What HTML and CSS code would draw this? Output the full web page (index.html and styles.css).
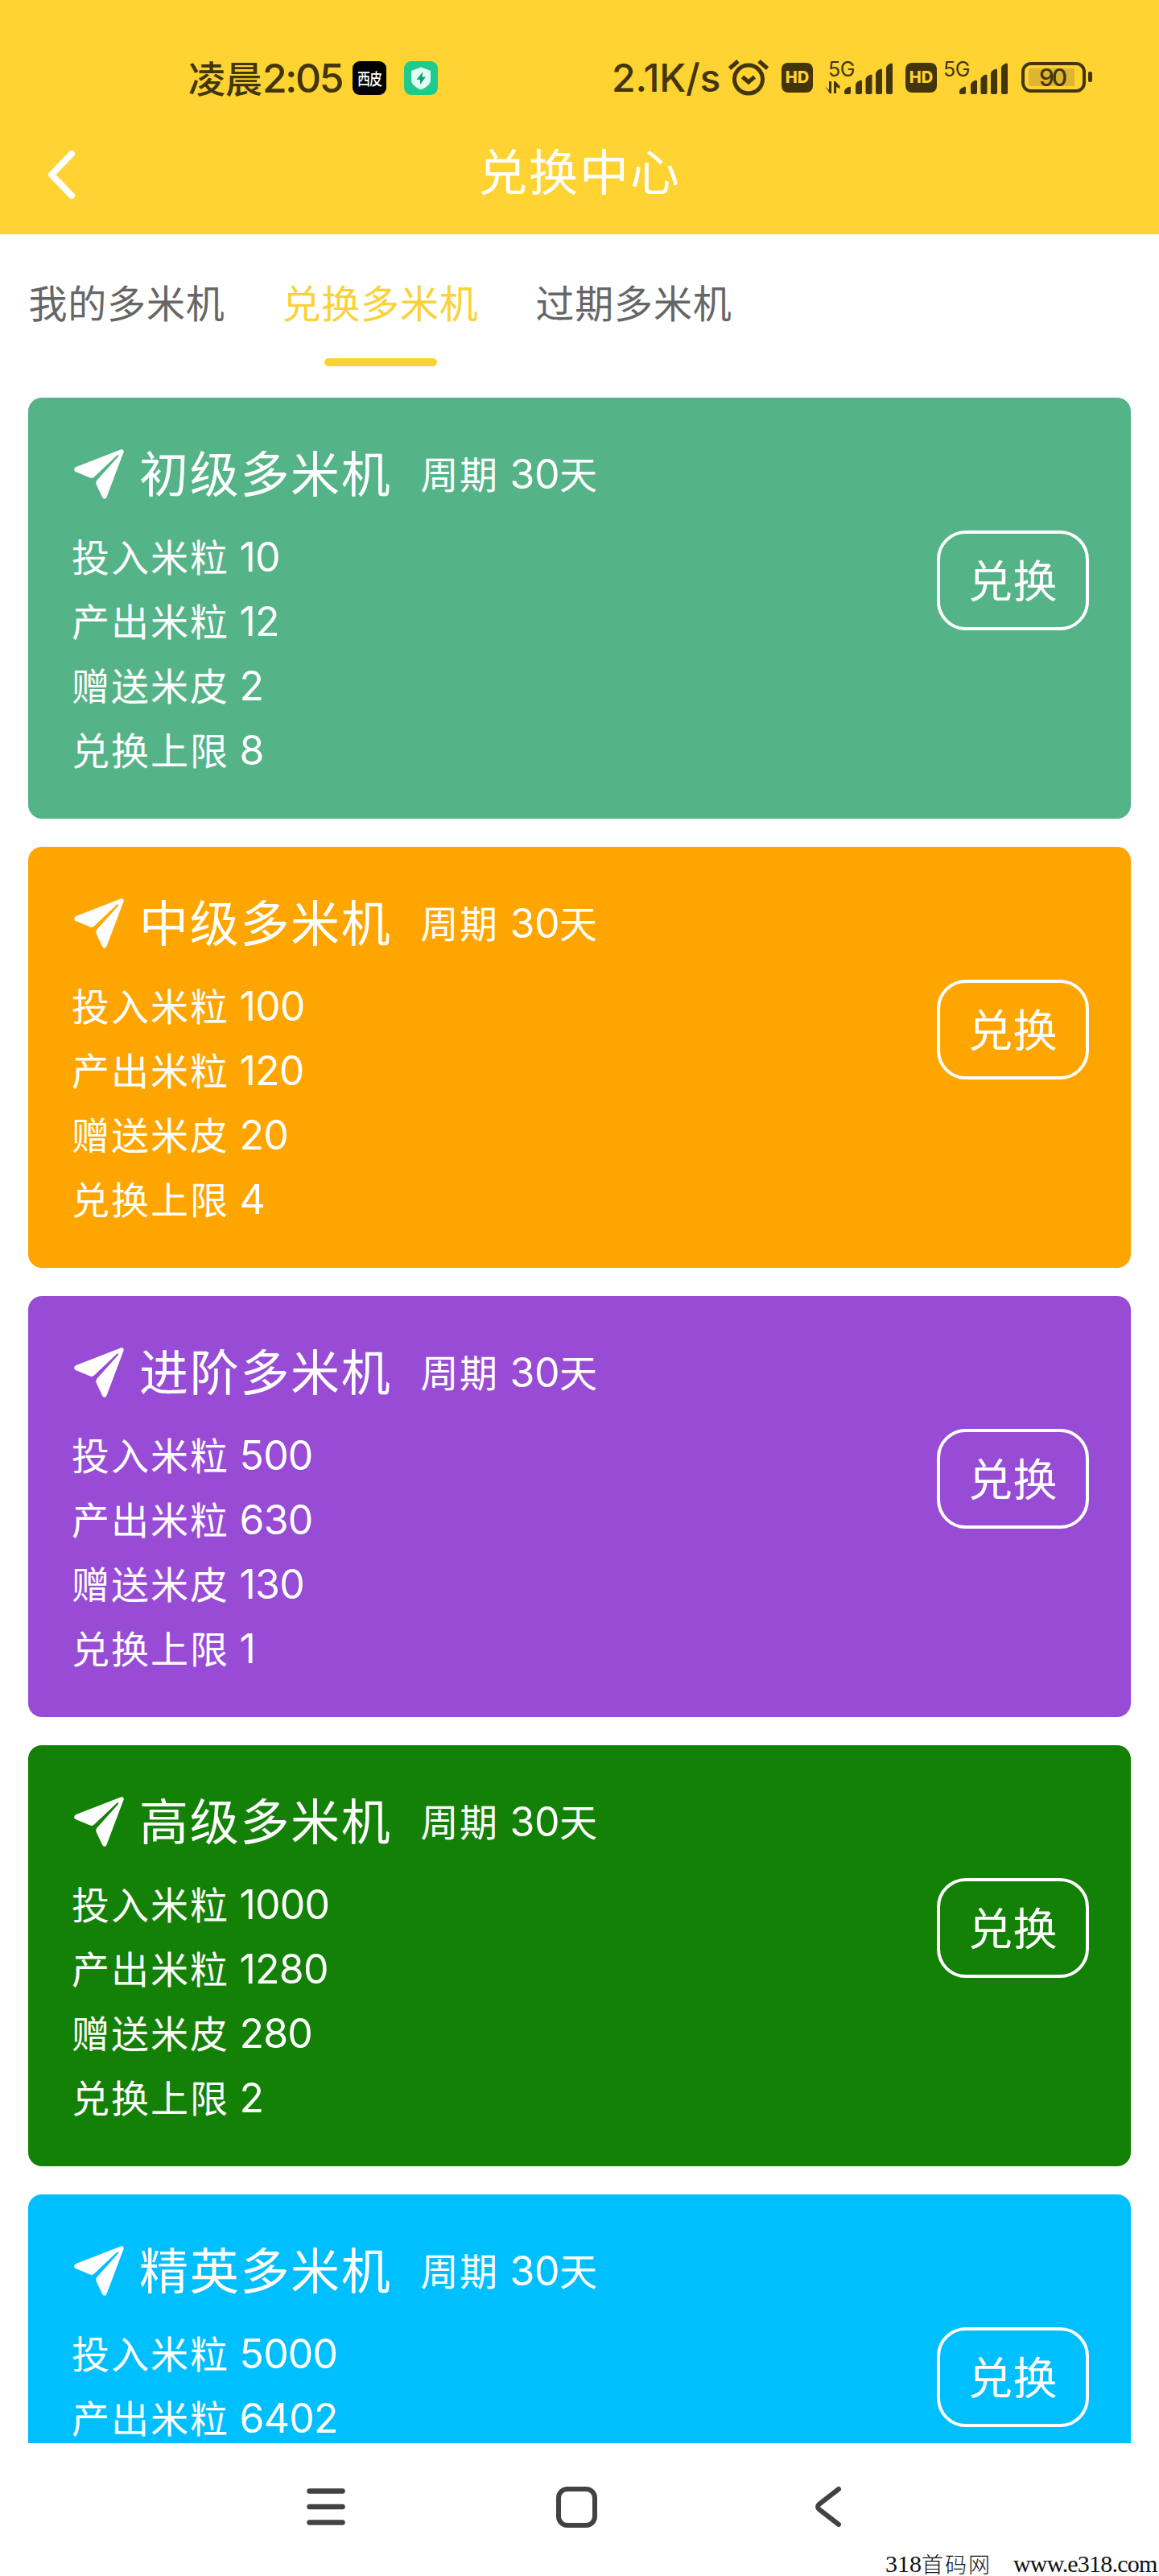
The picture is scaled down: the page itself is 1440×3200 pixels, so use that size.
FILE: index.html
```html
<!DOCTYPE html>
<html lang="zh-CN">
<head>
    <meta charset="UTF-8">
    <meta name="viewport" content="width=device-width, initial-scale=1.0">
    <title>兑换中心</title>
    <link rel="stylesheet" href="styles.css">
</head>
<body>
    <!-- Shared icons -->
    <svg class="defs" width="0" height="0">
        <symbol id="plane" viewBox="0 0 62 62">
            <path d="M58 .5 2.500 22C-.5 23.500-.5 26.500 2 28L20 35.500C22 36.300 23.500 36 25 34.500L53 8Q56 6 55 9L29 38C27.500 40 27 41.500 27.500 43.500L35 59.500C36.500 62.500 39.500 62.500 40.500 59.500L61.500 4C62.500 1.500 60.500-.5 58 .5Z" fill="#fff"/>
        </symbol>
        <symbol id="bars" viewBox="0 0 60 39">
            <path d="M1.500 39Q0 39 0 37V35Q1 31 7 29.500 8 29.500 8 31V37Q8 39 6 39ZM14 37V27Q15 23 20.500 21.500 22 21.500 22 23V37Q22 39 20 39H16Q14 39 14 37ZM26.500 37V20Q27.500 16 33 14.500 34.500 14.500 34.500 16V37Q34.500 39 32.500 39H28.500Q26.500 39 26.500 37ZM39 37V13Q40 9 45.500 7.500 47 7.500 47 9V37Q47 39 45 39H41Q39 39 39 37ZM52 37V6Q53 2 58.500.5 60 .5 60 2V37Q60 39 58 39H54Q52 39 52 37Z" fill="#42350c"/>
        </symbol>
    </svg>

    <!-- Header -->
    <header class="header">
        <div class="status-bar">
            <span class="clock">凌晨<b>2:05</b></span>
            <span class="app-icon"><i>西皮</i></span>
            <svg class="shield" width="42" height="42" viewBox="0 0 42 42">
                <rect width="42" height="42" rx="9" fill="#1ecb8b"/>
                <path d="M21 7.500 33 12V23C33 29 27 33 21 35.500 15 33 9 29 9 23V12Z" fill="#e2fff5"/>
                <path d="M23.500 13 15.500 23H20V29L27 19.500H22.500Z" fill="#12a373"/>
            </svg>
            <span class="speed">2.1K/s</span>
            <svg class="alarm" width="52" height="46" viewBox="0 0 52 46" fill="none" stroke="#42350c" stroke-width="5">
                <circle cx="26" cy="25.500" r="17.500"/>
                <path d="M2.500 12 13 3M39 3 49.500 12M18.500 22.500 26 29 33.500 22.500"/>
            </svg>
            <span class="hd">HD</span>
            <div class="signal">
                <span class="net">5G</span>
                <svg width="86" height="44" viewBox="0 0 86 44">
                    <path d="M0 33 5 38V27H8V42H6ZM11 42V27H13L18.500 33V36L14 34V42Z" fill="#42350c"/>
                    <use href="#bars" x="24" y="4" width="60" height="39"/>
                </svg>
            </div>
            <span class="hd hd-2">HD</span>
            <div class="signal signal-2">
                <span class="net">5G</span>
                <svg width="86" height="44" viewBox="0 0 86 44">
                    <use href="#bars" x="24" y="4" width="60" height="39"/>
                </svg>
            </div>
            <svg class="battery" width="88" height="38" viewBox="0 0 88 38">
                <rect x="2" y="2" width="76" height="34" rx="10" fill="none" stroke="#42350c" stroke-width="4"/>
                <rect x="9" y="8" width="57" height="22" fill="#dfb52f"/>
                <rect x="83" y="12" width="5" height="13" rx="2" fill="#42350c"/>
                <text x="22" y="30" textLength="35" class="charge">90</text>
            </svg>
        </div>
        <div class="title-bar">
            <svg class="back" width="34" height="60" viewBox="0 0 34 60" fill="none" stroke="#fff" stroke-width="8" stroke-linecap="round" stroke-linejoin="round">
                <path d="M30 4 5 30 30 56"/>
            </svg>
            <h1>兑换中心</h1>
        </div>
    </header>

    <!-- Tabs -->
    <nav class="tabs">
        <a class="tab">我的多米机</a>
        <a class="tab active">兑换多米机</a>
        <a class="tab">过期多米机</a>
    </nav>

    <!-- Cards -->
    <main class="card-list">
        <section class="card green">
            <div class="info">
                <h2><svg class="plane"><use href="#plane"/></svg><span>初级多米机</span><small>周期 <b>30</b>天</small></h2>
                <p>投入米粒 <b>10</b></p>
                <p>产出米粒 <b>12</b></p>
                <p>赠送米皮 <b>2</b></p>
                <p>兑换上限 <b>8</b></p>
            </div>
            <button>兑换</button>
        </section>

        <section class="card orange">
            <div class="info">
                <h2><svg class="plane"><use href="#plane"/></svg><span>中级多米机</span><small>周期 <b>30</b>天</small></h2>
                <p>投入米粒 <b>100</b></p>
                <p>产出米粒 <b>120</b></p>
                <p>赠送米皮 <b>20</b></p>
                <p>兑换上限 <b>4</b></p>
            </div>
            <button>兑换</button>
        </section>

        <section class="card purple">
            <div class="info">
                <h2><svg class="plane"><use href="#plane"/></svg><span>进阶多米机</span><small>周期 <b>30</b>天</small></h2>
                <p>投入米粒 <b>500</b></p>
                <p>产出米粒 <b>630</b></p>
                <p>赠送米皮 <b>130</b></p>
                <p>兑换上限 <b>1</b></p>
            </div>
            <button>兑换</button>
        </section>

        <section class="card dark-green">
            <div class="info">
                <h2><svg class="plane"><use href="#plane"/></svg><span>高级多米机</span><small>周期 <b>30</b>天</small></h2>
                <p>投入米粒 <b>1000</b></p>
                <p>产出米粒 <b>1280</b></p>
                <p>赠送米皮 <b>280</b></p>
                <p>兑换上限 <b>2</b></p>
            </div>
            <button>兑换</button>
        </section>

        <section class="card blue">
            <div class="info">
                <h2><svg class="plane"><use href="#plane"/></svg><span>精英多米机</span><small>周期 <b>30</b>天</small></h2>
                <p>投入米粒 <b>5000</b></p>
                <p>产出米粒 <b>6402</b></p>
            </div>
            <button>兑换</button>
        </section>
    </main>

    <!-- System navigation -->
    <footer class="nav-bar">
        <svg width="50" height="52" viewBox="0 0 50 52" stroke="#424242" stroke-width="6.500" stroke-linecap="round">
            <path d="M4.500 6.500H45.500M4.500 26H45.500M4.500 45.500H45.500"/>
        </svg>
        <svg class="home" width="52" height="52" viewBox="0 0 52 52" fill="none" stroke="#424242" stroke-width="6">
            <rect x="4" y="4" width="45" height="45" rx="11"/>
        </svg>
        <svg width="34" height="52" viewBox="0 0 34 52" fill="none" stroke="#424242" stroke-width="6" stroke-linecap="round">
            <path d="M30 4 6 22.500Q2 26 6 29.500L30 48"/>
        </svg>
        <div class="watermark">
            <span>318</span><span class="cn">首码网</span><span class="site">www.e318.com</span>
        </div>
    </footer>
</body>
</html>
```
FILE: styles.css
```css
/* Global styles */
* {
    box-sizing: border-box;
}

body {
    width: 1440px;
    height: 3200px;
    margin: 0;
    display: flex;
    flex-direction: column;
    overflow: hidden;
    background: #fff;
    font-family: "Noto Sans CJK SC", sans-serif;
}

b {
    font-family: Inter, sans-serif;
    font-weight: 400;
}

.defs {
    position: absolute;
}

/* Header */
.header {
    height: 291px;
    flex: none;
    background: #fed332;
}

.status-bar {
    display: flex;
    align-items: flex-start;
    height: 150px;
    padding: 73px 0 0 234px;
    color: #42350c;
}

.status-bar > * {
    flex: none;
}

.clock {
    width: 204px;
    margin-top: -2px;
    line-height: 48px;
    font-size: 46px;
    font-weight: 500;
    white-space: nowrap;
}

.clock b {
    font-size: 50px;
    font-weight: 500;
    letter-spacing: -2.5px;
}

.app-icon {
    width: 42px;
    height: 42px;
    margin-top: 3px;
    border-radius: 9px;
    background: #000;
    color: #fff;
    font-size: 16px;
    font-weight: 500;
    line-height: 42px;
    text-align: center;
}

.app-icon i {
    display: block;
    font-style: normal;
    letter-spacing: -1px;
    transform: scaleY(1.25);
}

.shield {
    margin: 3px 0 0 22px;
}

.speed {
    width: 140px;
    margin-left: 216px;
    font: 500 48px/48px Inter, sans-serif;
    letter-spacing: -0.2px;
    white-space: nowrap;
}

.alarm {
    margin-left: 4px;
}

.hd {
    width: 39px;
    height: 37px;
    margin: 5px 0 0 15px;
    border-radius: 8px;
    background: #42350c;
    color: #fed332;
    font: 800 20px/37px Inter, sans-serif;
    text-align: center;
}

.signal {
    position: relative;
    width: 86px;
    height: 44px;
    margin: 1px 0 0 15px;
}

.hd-2 {
    margin-left: 14px;
}

.signal-2 {
    margin-left: 4px;
}

.net {
    position: absolute;
    top: -3px;
    left: 4px;
    font: 400 25px/30px Inter, sans-serif;
    letter-spacing: -0.5px;
}

.battery {
    margin: 4px 0 0 15px;
}

.charge {
    font: 500 30px Inter, sans-serif;
    fill: #42350c;
}

.title-bar {
    display: flex;
    align-items: center;
    height: 134px;
    padding: 0 59px;
}

.title-bar h1 {
    flex: 1;
    margin: 0 34px 12px 0;
    color: #fff;
    font-size: 61px;
    font-weight: 400;
    line-height: 80px;
    letter-spacing: 2px;
    text-align: center;
}

/* Tabs */
.tabs {
    display: flex;
    flex: none;
    height: 203px;
}

.tab {
    display: flex;
    flex-direction: column;
    align-items: center;
    width: 315px;
    height: 164px;
    padding-top: 48px;
    color: #666;
    font-size: 48px;
    line-height: 70px;
    letter-spacing: 0.8px;
    white-space: nowrap;
}

.tab.active {
    color: #f9d236;
}

.tab.active::after {
    content: "";
    width: 140px;
    height: 10px;
    margin-top: 36px;
    border-radius: 5px;
    background: #f9d236;
}

/* Cards */
.card-list {
    display: flex;
    flex: 1;
    flex-direction: column;
    gap: 35px;
    min-height: 0;
    padding: 0 35px;
    overflow: hidden;
}

.card {
    display: flex;
    flex: none;
    justify-content: space-between;
    align-items: flex-start;
    height: 523px;
    padding: 45px 52px 45px 54px;
    border-radius: 17px;
    color: #fff;
}

.green {
    background: #54b387;
}

.orange {
    background: #ffa500;
}

.purple {
    background: #984cd6;
}

.dark-green {
    background: #138006;
}

.blue {
    background: #00bfff;
}

.card h2 {
    display: flex;
    align-items: center;
    height: 100px;
    margin: 0 0 11px;
    font-size: 61px;
    font-weight: 400;
    letter-spacing: 1.7px;
    white-space: nowrap;
}

.card h2 span {
    margin-bottom: 7px;
}

.plane {
    width: 62px;
    height: 62px;
    margin: 0 19px 0 3px;
}

.card small {
    margin: 0 0 5px 36px;
    font-size: 47px;
    letter-spacing: 1.5px;
}

.card p {
    margin: 0;
    font-size: 47px;
    line-height: 80px;
    letter-spacing: 2px;
    white-space: nowrap;
}

.card b {
    font-size: 50px;
    line-height: 1;
    letter-spacing: -0.8px;
}

.card small b {
    margin-left: 2px;
    letter-spacing: -0.5px;
}

.card button {
    width: 189px;
    height: 124px;
    margin-top: 120px;
    padding: 0 0 7px;
    border: 4px solid #fff;
    border-radius: 36px;
    background: transparent;
    color: #fff;
    font-family: inherit;
    font-size: 55px;
    letter-spacing: 0.5px;
}

/* System navigation */
.nav-bar {
    position: relative;
    display: flex;
    flex: none;
    height: 165px;
    padding: 53px 0 0 380px;
}

.home {
    margin: 0 270px 0 260px;
}

.watermark {
    position: absolute;
    right: 1px;
    bottom: 0;
    display: flex;
    width: 339px;
    color: #111;
    font: 30px/30px "Liberation Serif", serif;
    white-space: nowrap;
}

.watermark .cn {
    width: 114px;
    font-family: "Noto Sans CJK SC", sans-serif;
    font-size: 27px;
    font-weight: 300;
    letter-spacing: 2px;
}

.watermark .site {
    letter-spacing: -0.8px;
}
```
